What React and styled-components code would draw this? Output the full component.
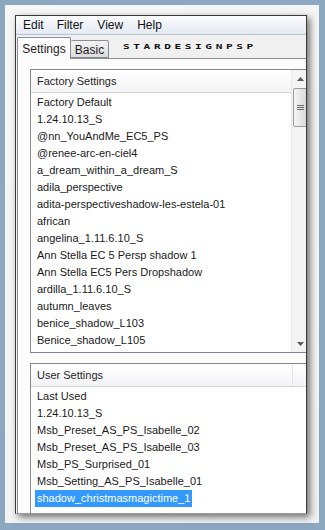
import React from "react";
import styled, { createGlobalStyle } from "styled-components";

const Global = createGlobalStyle`
  html, body { margin: 0; padding: 0; }
  body {
    background: #8ca7c0;
    font-family: "Liberation Sans", Arial, sans-serif;
    font-size: 12px;
    color: #1e1e1e;
    width: 325px;
    height: 530px;
    overflow: hidden;
  }
`;

const Frame = styled.div`
  margin: 5px 0 0 5px;
  width: 314px;
  height: 518px;
  box-sizing: border-box;
  padding: 10px 0 0 10px;
  background: linear-gradient(135deg, #f7f7f7, #f1f1f1);
`;

const Window = styled.div`
  width: 292px;
  height: 499px;
  box-sizing: border-box;
  border: 1px solid #3a3a3a;
  border-bottom-color: #9a9a9a;
  background: #f0f0f0;
  box-shadow: 3px 3px 7px rgba(0, 0, 0, 0.55);
  display: flex;
  flex-direction: column;
  overflow: hidden;
`;

const MenuBar = styled.div`
  height: 18px;
  flex: none;
  display: flex;
  align-items: center;
  padding-left: 1px;
  background: linear-gradient(#fbfcfe, #e4eaf3);
  border-bottom: 1px solid #b9c2cc;
`;

const MenuItem = styled.span`
  padding: 0 6px;
  margin-right: ${(p) => p.$gap || 0}px;
  font-size: 12px;
  line-height: 18px;
  color: #111;
`;

const TabStrip = styled.div`
  height: 23px;
  flex: none;
  display: flex;
  align-items: flex-end;
  padding-left: 1px;
  position: relative;
  z-index: 1;
`;

const Tab = styled.div`
  box-sizing: border-box;
  height: ${(p) => (p.$active ? 22 : 18)}px;
  width: ${(p) => p.$w}px;
  margin-bottom: ${(p) => (p.$active ? -1 : 0)}px;
  border: 1px solid #898c95;
  border-bottom: ${(p) => (p.$active ? "none" : "1px solid #898c95")};
  border-left: ${(p) => (p.$active ? "1px solid #898c95" : "none")};
  background: ${(p) =>
    p.$active ? "#fcfcfc" : "linear-gradient(#f3f3f3, #dcdcdc)"};
  display: flex;
  align-items: center;
  justify-content: center;
  font-size: 12px;
  padding-top: ${(p) => (p.$active ? 0 : 2)}px;
  border-radius: 2px 2px 0 0;
`;

const Brand = styled.span`
  margin: 0 0 8px 14px;
  font-family: "DejaVu Sans Mono", monospace;
  font-weight: bold;
  font-size: 8.5px;
  letter-spacing: 2.8px;
  color: #111;
  transform: scale(1.3, 0.85);
  transform-origin: left center;
  line-height: 8px;
`;

const Panel = styled.div`
  flex: 1;
  margin-left: 1px;
  width: 300px;
  border-left: 1px solid #898c95;
  border-top: 1px solid #898c95;
  background: #fcfcfc;
  padding: 10px 0 0 12px;
  display: flex;
  flex-direction: column;
  gap: 10px;
  overflow: hidden;
`;

const ListBox = styled.div`
  width: 280px;
  flex: ${(p) => (p.$grow ? 1 : "none")};
  height: ${(p) => (p.$h ? p.$h + "px" : "auto")};
  box-sizing: border-box;
  border: 1px solid #828790;
  border-bottom: ${(p) => (p.$grow ? "none" : "1px solid #828790")};
  background: #fff;
  display: flex;
`;

const Column = styled.div`
  flex: 1;
  min-width: 0;
  display: flex;
  flex-direction: column;
`;

const Header = styled.div`
  height: 22px;
  flex: none;
  border-bottom: 1px solid #d5d5d5;
  background: linear-gradient(#ffffff, #f3f4f6);
  display: flex;
  align-items: center;
  font-size: 11px;
  color: #262626;
`;

const HeaderCell = styled.div`
  padding-left: 6px;
  width: ${(p) => (p.$w ? p.$w + "px" : "auto")};
  flex: ${(p) => (p.$w ? "none" : 1)};
  box-sizing: border-box;
  height: 100%;
  display: flex;
  align-items: center;
  border-right: ${(p) => (p.$divider ? "1px solid #e3e4e6" : "none")};
`;

const Rows = styled.div`
  padding-top: 1px;
  display: flex;
  flex-direction: column;
`;

const Row = styled.div`
  height: 17px;
  display: flex;
  align-items: center;
  padding-left: 4px;
`;

const RowText = styled.span`
  padding: 0 2px;
  line-height: 17px;
  font-size: 11px;
  white-space: nowrap;
  background: ${(p) => (p.$sel ? "#3399ff" : "transparent")};
  color: ${(p) => (p.$sel ? "#fff" : "#1a1a1a")};
`;

const ScrollBar = styled.div`
  width: 17px;
  flex: none;
  background: #f4f4f4;
  border-left: 1px solid #eaeaea;
  display: flex;
  flex-direction: column;
`;

const Arrow = styled.div`
  height: 17px;
  display: flex;
  align-items: center;
  justify-content: center;
  margin-top: ${(p) => (p.$push ? "auto" : 0)};
`;

const Thumb = styled.div`
  margin: 1px 1px 0 1px;
  height: 39px;
  box-sizing: border-box;
  border: 1px solid #9a9a9a;
  border-radius: 2px;
  background: linear-gradient(90deg, #f5f5f5, #e6e6e6 50%, #d8d8d8);
  display: flex;
  align-items: center;
  justify-content: center;
`;

const factory = [
  "Factory Default",
  "1.24.10.13_S",
  "@nn_YouAndMe_EC5_PS",
  "@renee-arc-en-ciel4",
  "a_dream_within_a_dream_S",
  "adila_perspective",
  "adita-perspectiveshadow-les-estela-01",
  "african",
  "angelina_1.11.6.10_S",
  "Ann Stella EC 5 Persp shadow 1",
  "Ann Stella EC5 Pers Dropshadow",
  "ardilla_1.11.6.10_S",
  "autumn_leaves",
  "benice_shadow_L103",
  "Benice_shadow_L105",
];

const user = [
  "Last Used",
  "1.24.10.13_S",
  "Msb_Preset_AS_PS_Isabelle_02",
  "Msb_Preset_AS_PS_Isabelle_03",
  "Msb_PS_Surprised_01",
  "Msb_Setting_AS_PS_Isabelle_01",
  "shadow_christmasmagictime_1",
];

const Up = () => (
  <svg width="7" height="4" viewBox="0 0 7 4">
    <path d="M0 4 L3.5 0 L7 4 Z" fill="#5a5a5a" />
  </svg>
);
const Down = () => (
  <svg width="7" height="4" viewBox="0 0 7 4">
    <path d="M0 0 L3.5 4 L7 0 Z" fill="#5a5a5a" />
  </svg>
);
const Grip = () => (
  <svg width="7" height="6" viewBox="0 0 7 6">
    <path d="M0 0.5H7M0 2.5H7M0 4.5H7" stroke="#6a6a6a" strokeWidth="1" />
  </svg>
);

export default function App() {
  return (
    <>
      <Global />
      <Frame>
        <Window>
          <MenuBar>
            <MenuItem $gap={1}>Edit</MenuItem>
            <MenuItem $gap={2}>Filter</MenuItem>
            <MenuItem $gap={2}>View</MenuItem>
            <MenuItem>Help</MenuItem>
          </MenuBar>
          <TabStrip>
            <Tab $active $w={54}>Settings</Tab>
            <Tab $w={38}>Basic</Tab>
            <Brand>STARDESIGNPSP</Brand>
          </TabStrip>
          <Panel>
            <ListBox $h={284}>
              <Column>
                <Header>
                  <HeaderCell>Factory Settings</HeaderCell>
                </Header>
                <Rows>
                  {factory.map((t) => (
                    <Row key={t}>
                      <RowText>{t}</RowText>
                    </Row>
                  ))}
                </Rows>
              </Column>
              <ScrollBar>
                <Arrow>
                  <Up />
                </Arrow>
                <Thumb>
                  <Grip />
                </Thumb>
                <Arrow $push>
                  <Down />
                </Arrow>
              </ScrollBar>
            </ListBox>
            <ListBox $grow>
              <Column>
                <Header>
                  <HeaderCell $w={262} $divider>
                    User Settings
                  </HeaderCell>
                  <HeaderCell />
                </Header>
                <Rows>
                  {user.map((t, i) => (
                    <Row key={t}>
                      <RowText $sel={i === user.length - 1}>{t}</RowText>
                    </Row>
                  ))}
                </Rows>
              </Column>
            </ListBox>
          </Panel>
        </Window>
      </Frame>
    </>
  );
}
